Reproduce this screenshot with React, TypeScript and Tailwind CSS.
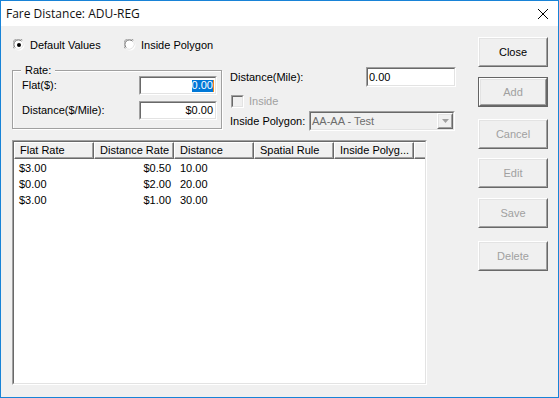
import React from "react";

const dlg = "font-['Liberation_Sans',Arial,sans-serif] text-[11px] leading-none text-black";

function Sunken({ className = "", inner = "bg-white", children }: { className?: string; inner?: string; children?: React.ReactNode }) {
  return (
    <div className={`border border-t-[#a0a0a0] border-l-[#a0a0a0] border-b-white border-r-white ${className}`}>
      <div className={`h-full w-full border border-t-[#696969] border-l-[#696969] border-b-[#e3e3e3] border-r-[#e3e3e3] ${inner}`}>
        {children}
      </div>
    </div>
  );
}

function Raised({ className = "", children }: { className?: string; children?: React.ReactNode }) {
  return (
    <div className={`border border-t-white border-l-white border-b-[#696969] border-r-[#696969] ${className}`}>
      <div className="h-full w-full border border-t-[#e3e3e3] border-l-[#e3e3e3] border-b-[#a0a0a0] border-r-[#a0a0a0] bg-[#f0f0f0] flex items-center justify-center">
        {children}
      </div>
    </div>
  );
}

function Radio({ checked }: { checked?: boolean }) {
  return (
    <svg width="12" height="12" viewBox="0 0 12 12" className="shrink-0">
      <circle cx="6" cy="6" r="5.5" fill="#fff" />
      <path d="M1.2 9.5 A5.5 5.5 0 0 1 9.5 1.2" fill="none" stroke="#a0a0a0" strokeWidth="1" />
      <path d="M2.2 8.6 A4.3 4.3 0 0 1 8.6 2.2" fill="none" stroke="#696969" strokeWidth="1" />
      <path d="M9.8 2.5 A5.5 5.5 0 0 1 2.5 9.8" fill="none" stroke="#e3e3e3" strokeWidth="1" />
      {checked && <circle cx="6" cy="6" r="2" fill="#000" />}
    </svg>
  );
}

const buttons = [
  { label: "Close", mt: "mt-0", enabled: true },
  { label: "Add", mt: "mt-[10px]", def: true },
  { label: "Cancel", mt: "mt-[12px]" },
  { label: "Edit", mt: "mt-[9px]" },
  { label: "Save", mt: "mt-[10px]" },
  { label: "Delete", mt: "mt-[13px]" },
];

const columns = ["Flat Rate", "Distance Rate", "Distance", "Spatial Rule", "Inside Polyg..."];

const rows = [
  { flat: "$3.00", rate: "$0.50", dist: "10.00" },
  { flat: "$0.00", rate: "$2.00", dist: "20.00" },
  { flat: "$3.00", rate: "$1.00", dist: "30.00" },
];

export default function App() {
  return (
    <div className="w-[559px] h-[398px] border border-[#1883d7] bg-[#f0f0f0] flex flex-col overflow-hidden">
      {/* Title bar */}
      <div className="h-[25px] bg-white flex items-center justify-between pl-[5px] pr-[10px]">
        <span className="font-['Segoe_UI','Open_Sans',sans-serif] text-[12px] text-[#111]">Fare Distance: ADU-REG</span>
        <svg width="10" height="10" viewBox="0 0 10 10">
          <path d="M0 0 L10 10 M10 0 L0 10" stroke="#000" strokeWidth="1" />
        </svg>
      </div>

      <div className={`flex flex-1 ${dlg}`}>
        {/* Left area */}
        <div className="w-[426px] shrink-0 pl-[11px] pt-[13px] flex flex-col">
          <div className="flex items-center h-[12px] pl-[1px]">
            <div className="flex items-center w-[111px]">
              <Radio checked />
              <span className="ml-[5px]">Default Values</span>
            </div>
            <Radio />
            <span className="ml-[5px]">Inside Polygon</span>
          </div>

          <div className="flex mt-[16px] h-[64px]">
            {/* Rate group */}
            <div className="relative shrink-0 mt-[3px] h-[59px] w-[210px] border border-[#a0a0a0] shadow-[inset_1px_1px_0_#fff,1px_1px_0_#fff]">
              <span className="absolute left-[8px] -top-[7px] bg-[#f0f0f0] px-[4px] h-[13px] flex items-center">Rate:</span>
              <div className="flex items-center justify-between pl-[9px] pr-[4px] mt-[5px] h-[19px]">
                <span>Flat($):</span>
                <Sunken className="w-[78px] h-[19px]">
                  <div className="h-full flex items-center justify-end pr-[1px]">
                    <span className="bg-[#0078d7] text-white h-[12px] flex items-center">0.00</span>
                    <span className="w-[1px] h-[12px] bg-[#f08a1c]" />
                  </div>
                </Sunken>
              </div>
              <div className="flex items-center justify-between pl-[9px] pr-[4px] mt-[6px] h-[19px]">
                <span>Distance($/Mile):</span>
                <Sunken className="w-[78px] h-[19px]">
                  <div className="h-full flex items-center justify-end pr-[2px]">$0.00</div>
                </Sunken>
              </div>
            </div>

            {/* Distance / polygon controls */}
            <div className="ml-[8px] w-[226px] shrink-0 flex flex-col">
              <div className="flex items-center justify-between h-[20px]">
                <span>Distance(Mile):</span>
                <Sunken className="w-[90px] h-[20px]">
                  <div className="h-full flex items-center pl-[1px]">0.00</div>
                </Sunken>
              </div>
              <div className="flex items-center mt-[8px] h-[13px] pl-[1px]">
                <Sunken className="w-[13px] h-[13px]" inner="bg-[#f0f0f0]" />
                <span className="ml-[5px] text-[#a0a0a0]">Inside</span>
              </div>
              <div className="flex items-center justify-between mt-[3px] h-[20px]">
                <span>Inside Polygon:</span>
                <Sunken className="w-[146px] h-[20px] mr-[1px]" inner="bg-[#f0f0f0]">
                  <div className="h-full flex items-center justify-between">
                    <span className="pl-[1px] text-[#6d6d6d]">AA-AA - Test</span>
                    <Raised className="w-[16px] h-full">
                      <svg width="7" height="4" viewBox="0 0 7 4">
                        <path d="M0 0 H7 L3.5 4 Z" fill="#a0a0a0" />
                      </svg>
                    </Raised>
                  </div>
                </Sunken>
              </div>
            </div>
          </div>

          {/* List view */}
          <Sunken className="mt-[9px] w-[415px] h-[245px]">
            <div className="flex h-[17px]">
              {columns.map((c) => (
                <div
                  key={c}
                  className="w-[80px] h-full bg-[#f0f0f0] border-t border-l border-t-white border-l-white border-r border-b border-r-[#696969] border-b-[#696969] shadow-[inset_-1px_-1px_0_#a0a0a0] flex items-center pl-[5px]"
                >
                  {c}
                </div>
              ))}
              <div className="flex-1 h-full bg-[#f0f0f0] border-t border-l border-t-white border-l-white border-b border-b-[#696969] shadow-[inset_0_-1px_0_#a0a0a0]" />
            </div>
            <div className="pt-[1px]">
              {rows.map((r, i) => (
                <div key={i} className="flex h-[16px] items-center">
                  <div className="w-[80px] pl-[5px]">{r.flat}</div>
                  <div className="w-[80px] text-right pr-[3px]">{r.rate}</div>
                  <div className="w-[80px] pl-[6px]">{r.dist}</div>
                </div>
              ))}
            </div>
          </Sunken>
        </div>

        {/* Buttons */}
        <div className="ml-[51px] pt-[11px] flex flex-col w-[70px] shrink-0">
          {buttons.map((b) =>
            b.def ? (
              <div key={b.label} className={`${b.mt} border border-[#646464] h-[30px]`}>
                <Raised className="h-full w-full">
                  <span className="text-[#a0a0a0]">{b.label}</span>
                </Raised>
              </div>
            ) : (
              <Raised key={b.label} className={`${b.mt} h-[30px]`}>
                <span className={b.enabled ? "text-black" : "text-[#a0a0a0]"}>{b.label}</span>
              </Raised>
            )
          )}
        </div>
      </div>
    </div>
  );
}
